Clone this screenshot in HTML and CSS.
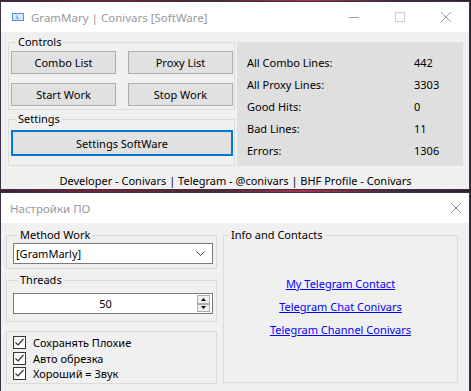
FILE: index.html
```html
<!DOCTYPE html>
<html lang="en">
<head>
    <meta charset="UTF-8">
    <meta name="viewport" content="width=device-width, initial-scale=1.0">
    <title>GramMary | Conivars</title>
    <link rel="stylesheet" href="styles.css">
</head>
<body>
    <div class="desk">
        <!-- main window -->
        <div class="win main-win">
            <div class="titlebar">
                <svg class="app-icon" width="12" height="8" viewBox="0 0 12 8">
                    <rect x="0.5" y="0.5" width="11" height="7" fill="#dbe9fb" stroke="#4a8fe0"/>
                    <path d="M5 2.5v3h2" fill="none" stroke="#4a8fe0"/>
                </svg>
                <span class="title">GramMary | Conivars [SoftWare]</span>
                <div class="caption">
                    <div class="cap-btn">
                        <svg width="10" height="10" viewBox="0 0 10 10"><path d="M0 5.5h10" stroke="#999"/></svg>
                    </div>
                    <div class="cap-btn">
                        <svg width="10" height="10" viewBox="0 0 10 10"><rect x="0.5" y="0.5" width="9" height="9" fill="none" stroke="#ccc"/></svg>
                    </div>
                    <div class="cap-btn">
                        <svg width="10" height="10" viewBox="0 0 10 10"><path d="M0 0L10 10M10 0L0 10" stroke="#999"/></svg>
                    </div>
                </div>
            </div>
            <div class="client">
                <div class="top-row">
                    <div class="left-col">
                        <fieldset class="group controls">
                            <legend>Controls</legend>
                            <div class="btn-grid">
                                <button class="btn">Combo List</button>
                                <button class="btn">Proxy List</button>
                                <button class="btn">Start Work</button>
                                <button class="btn">Stop Work</button>
                            </div>
                        </fieldset>
                        <fieldset class="group settings">
                            <legend>Settings</legend>
                            <button class="btn btn-focus">Settings SoftWare</button>
                        </fieldset>
                    </div>
                    <div class="stats">
                        <div class="stat-row"><span class="stat-label">All Combo Lines:</span><span>442</span></div>
                        <div class="stat-row"><span class="stat-label">All Proxy Lines:</span><span>3303</span></div>
                        <div class="stat-row"><span class="stat-label">Good Hits:</span><span>0</span></div>
                        <div class="stat-row"><span class="stat-label">Bad Lines:</span><span>11</span></div>
                        <div class="stat-row"><span class="stat-label">Errors:</span><span>1306</span></div>
                    </div>
                </div>
                <div class="footer">Developer - Conivars | Telegram - @conivars | BHF Profile - Conivars</div>
            </div>
        </div>

        <!-- settings dialog -->
        <div class="win dialog">
            <div class="titlebar dlg-title">
                <span class="title">Настройки ПО</span>
                <div class="cap-btn small">
                    <svg width="10" height="10" viewBox="0 0 10 10"><path d="M0 0L10 10M10 0L0 10" stroke="#888"/></svg>
                </div>
            </div>
            <div class="client dlg-client">
                <div class="dlg-left">
                    <fieldset class="group method">
                        <legend>Method Work</legend>
                        <div class="combo">
                            <span>[GramMarly]</span>
                            <svg width="9" height="5" viewBox="0 0 9 5"><path d="M0.5 0.5L4.5 4.5L8.5 0.5" fill="none" stroke="#444"/></svg>
                        </div>
                    </fieldset>
                    <fieldset class="group threads">
                        <legend>Threads</legend>
                        <div class="numeric">
                            <span class="num-value">50</span>
                            <div class="spinner">
                                <div class="spin-btn"><svg width="5" height="3" viewBox="0 0 5 3"><path d="M0 3L2.5 0L5 3Z" fill="#000"/></svg></div>
                                <div class="spin-btn"><svg width="5" height="3" viewBox="0 0 5 3"><path d="M0 0L2.5 3L5 0Z" fill="#000"/></svg></div>
                            </div>
                        </div>
                    </fieldset>
                    <div class="group checks">
                        <label class="check"><span class="box"><svg width="11" height="11" viewBox="0 0 11 11"><path d="M1.5 5.5L4 8L9.5 2" fill="none" stroke="#333" stroke-width="1.2"/></svg></span>Сохранять Плохие</label>
                        <label class="check"><span class="box"><svg width="11" height="11" viewBox="0 0 11 11"><path d="M1.5 5.5L4 8L9.5 2" fill="none" stroke="#333" stroke-width="1.2"/></svg></span>Авто обрезка</label>
                        <label class="check"><span class="box"><svg width="11" height="11" viewBox="0 0 11 11"><path d="M1.5 5.5L4 8L9.5 2" fill="none" stroke="#333" stroke-width="1.2"/></svg></span>Хороший = Звук</label>
                    </div>
                </div>
                <fieldset class="group info">
                    <legend>Info and Contacts</legend>
                    <div class="links">
                        <a href="#">My Telegram Contact</a>
                        <a href="#">Telegram Chat Conivars</a>
                        <a href="#">Telegram Channel Conivars</a>
                    </div>
                </fieldset>
            </div>
        </div>
    </div>
</body>
</html>
```

FILE: styles.css
```css
* {
    box-sizing: border-box;
}
body {
    margin: 0;
    background: #2c2233;
    font-family: "Noto Sans", "Open Sans", sans-serif;
    font-size: 11px;
    color: #000000;
    overflow: hidden;
}
.desk {
    width: 471px;
    height: 391px;
    padding-top: 1px;
    overflow: hidden;
    background: linear-gradient(90deg, #3b2436 0%, #7a2232 20%, #4a2a30 45%, #b0304a 65%, #3a2a3a 85%, #2c2233 100%);
}
.win {
    width: 470px;
    border: 1px solid #3d3046;
    background: #f0f0f0;
}
.main-win {
    height: 189px;
    margin-bottom: 2px;
}
.dialog {
    height: 220px;
}
.titlebar {
    height: 30px;
    background: #ffffff;
    display: flex;
    align-items: center;
}
.app-icon {
    margin: 0 7px 0 11px;
}
.title {
    color: #999999;
    font-size: 11.5px;
}
.dlg-title {
    padding-left: 9px;
}
.caption {
    margin-left: auto;
    display: flex;
    height: 100%;
}
.cap-btn {
    width: 46px;
    height: 100%;
    display: flex;
    align-items: center;
    justify-content: center;
}
.cap-btn.small {
    width: 26px;
    margin-left: auto;
}
.client {
    padding: 2px 6px 0 7px;
}
.top-row {
    display: flex;
    align-items: flex-start;
    gap: 2px;
}
.left-col {
    width: 227px;
}
.group {
    margin: 0;
    border: 1px solid #dcdcdc;
    min-width: 0;
}
.group legend {
    padding: 0 2px;
    margin-left: 5px;
    line-height: 16px;
}
.controls {
    padding: 1px 1px 3px 2px;
}
.btn-grid {
    display: grid;
    grid-template-columns: 105px 105px;
    column-gap: 12px;
    row-gap: 9px;
}
.btn {
    height: 23px;
    padding: 0;
    border: 1px solid #adadad;
    background: #e1e1e1;
    font-family: inherit;
    font-size: 11px;
    color: #000000;
}
.settings {
    margin-top: 1px;
    padding: 3px 1px 9px 2px;
}
.btn-focus {
    width: 222px;
    height: 26px;
    border: 2px solid #0078d7;
}
.stats {
    flex: 1;
    margin-top: 8px;
    height: 124px;
    padding: 9px 10px 0 10px;
    background: #dfdfdf;
}
.stat-row {
    display: flex;
    height: 22px;
    align-items: center;
}
.stat-label {
    width: 167px;
}
.footer {
    text-align: center;
    margin-top: 7px;
}
.dlg-client {
    display: flex;
    gap: 6px;
    padding: 4px 5px 0 5px;
}
.dlg-left {
    width: 211px;
}
.method {
    padding: 0 3px 4px 6px;
}
.combo {
    height: 21px;
    background: #ffffff;
    border: 1px solid #7a7a7a;
    display: flex;
    align-items: center;
    justify-content: space-between;
    padding: 0 7px 0 2px;
}
.threads {
    margin-top: 3px;
    padding: 5px 3px 7px 6px;
}
.numeric {
    height: 21px;
    background: #ffffff;
    border: 1px solid #7a7a7a;
    display: flex;
    align-items: center;
}
.num-value {
    flex: 1;
    text-align: center;
}
.spinner {
    width: 15px;
    height: 100%;
    display: flex;
    flex-direction: column;
    padding: 1px 2px 1px 0;
}
.spin-btn {
    flex: 1;
    border: 1px solid #adadad;
    background: #f0f0f0;
    display: flex;
    align-items: center;
    justify-content: center;
}
.checks {
    margin-top: 9px;
    height: 53px;
    padding: 3px 0 0 6px;
    display: flex;
    flex-direction: column;
}
.check {
    display: flex;
    align-items: center;
    height: 15.5px;
}
.box {
    width: 13px;
    height: 13px;
    border: 1px solid #333333;
    background: #ffffff;
    margin-right: 7px;
    display: flex;
}
.info {
    width: 235px;
    height: 156px;
    padding: 0;
}
.links {
    display: flex;
    flex-direction: column;
    align-items: center;
    padding-top: 33px;
    gap: 7px;
}
.links a {
    color: #0000ff;
    line-height: 16px;
}
```
